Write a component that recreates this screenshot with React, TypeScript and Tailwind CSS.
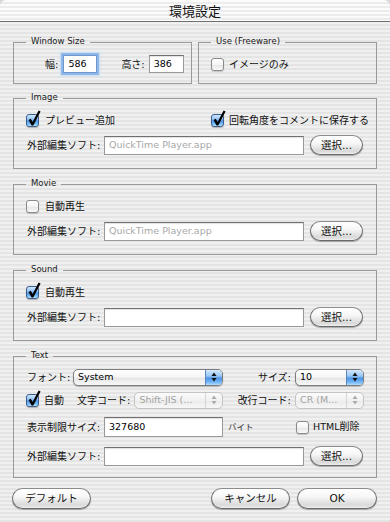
import React from "react";

const STRIPES =
  "bg-[repeating-linear-gradient(to_bottom,#f0f0f0_0px,#f0f0f0_2px,#e4e4e4_2px,#e4e4e4_4px)]";

function Check({ checked }: { checked?: boolean }) {
  return (
    <span className="relative inline-block w-[13px] h-[13px] shrink-0">
      {checked ? (
        <span className="absolute inset-0 rounded-[3px] border border-[#3e5f8e] bg-[linear-gradient(to_bottom,#cfe6fd_0%,#8fc2f5_40%,#4a93e6_55%,#7fc3fb_85%,#b8e2ff_100%)] shadow-[0_1px_1px_rgba(0,0,0,0.25)]" />
      ) : (
        <span className="absolute inset-0 rounded-[3px] border border-[#8a8a8a] bg-[linear-gradient(to_bottom,#ffffff_0%,#f4f4f4_50%,#e6e6e6_55%,#fafafa_100%)] shadow-[0_1px_1px_rgba(0,0,0,0.18)]" />
      )}
      {checked && (
        <svg
          className="absolute left-[1px] top-[-4px] overflow-visible"
          width="14"
          height="17"
          viewBox="0 0 14 17"
        >
          <polygon
            points="1.5,10 3.8,8.8 5.6,12 11.6,0.5 13.6,1.4 6.3,15.6 4.6,15.6"
            fill="#000"
          />
        </svg>
      )}
    </span>
  );
}

function Field({
  w,
  h = 19,
  value,
  gray,
  focus,
}: {
  w: string;
  h?: number;
  value?: string;
  gray?: boolean;
  focus?: boolean;
}) {
  return (
    <div
      className={`${w} ${h === 18 ? "h-[18px]" : h === 20 ? "h-[20px]" : "h-[19px]"} shrink-0 flex items-center bg-white border ${
        focus
          ? "border-[#6f97c9] shadow-[0_0_0_2px_#8db8ea,0_0_2px_3px_#c6dcf4]"
          : "border-[#999] border-t-[#707070] shadow-[inset_0_1px_1px_rgba(0,0,0,0.12)]"
      }`}
    >
      {value && (
        <span
          className={`pl-[4px] text-[9.5px] font-['DejaVu_Sans',sans-serif] ${
            gray ? "text-[#a8a8a8]" : "text-black"
          }`}
        >
          {value}
        </span>
      )}
    </div>
  );
}

function Btn({ label, w, h = 20 }: { label: string; w: string; h?: number }) {
  return (
    <div
      className={`${w} ${h === 21 ? "h-[21px]" : "h-[20px]"} shrink-0 rounded-full border border-[#6a6a6a] border-t-[#8c8c8c] bg-[linear-gradient(to_bottom,#ffffff_0%,#f7f7f7_40%,#e9e9e9_60%,#d9d9d9_85%,#f0f0f0_100%)] shadow-[0_1px_1px_rgba(0,0,0,0.3)] flex items-center justify-center`}
    >
      <span className="text-[10.5px] leading-none">{label}</span>
    </div>
  );
}

function Arrows({ disabled }: { disabled?: boolean }) {
  const c = disabled ? "#a9a9a9" : "#111";
  return (
    <svg width="6" height="10" viewBox="0 0 6 10">
      <polygon points="3,0.5 5.5,4 0.5,4" fill={c} />
      <polygon points="0.5,6 5.5,6 3,9.5" fill={c} />
    </svg>
  );
}

function Popup({
  w,
  text,
  disabled,
}: {
  w: string;
  text: string;
  disabled?: boolean;
}) {
  return (
    <div
      className={`${w} h-[17px] shrink-0 flex rounded-[5px] border overflow-hidden ${
        disabled
          ? "border-[#c4c4c4] bg-[linear-gradient(to_bottom,#fbfbfb,#f1f1f1_50%,#ebebeb_55%,#f7f7f7)]"
          : "border-[#7d7d7d] bg-[linear-gradient(to_bottom,#ffffff,#f6f6f6_45%,#e6e6e6_55%,#f8f8f8)] shadow-[0_1px_1px_rgba(0,0,0,0.25)]"
      }`}
    >
      <div className="flex-1 flex items-center pl-[4px] overflow-hidden">
        <span
          className={`text-[9.5px] whitespace-nowrap font-['DejaVu_Sans','Noto_Sans_CJK_JP',sans-serif] ${
            disabled ? "text-[#a4a4a4]" : "text-black"
          }`}
        >
          {text}
        </span>
      </div>
      <div
        className={`w-[17px] flex items-center justify-center border-l ${
          disabled
            ? "border-[#d6d6d6] bg-transparent"
            : "border-[#5d86bd] bg-[linear-gradient(to_bottom,#d6e9fd_0%,#97c6f5_40%,#4f96e8_55%,#6fb3f6_80%,#b3defe_100%)]"
        }`}
      >
        <Arrows disabled={disabled} />
      </div>
    </div>
  );
}

function Group({
  title,
  className,
  children,
}: {
  title: string;
  className?: string;
  children: React.ReactNode;
}) {
  return (
    <fieldset className={`border border-[#9a9a9a] min-w-0 ${className ?? ""}`}>
      <legend className="ml-[12px] px-[5px] leading-[12px] text-[8.5px] font-normal text-[#1a1a1a] font-['DejaVu_Sans',sans-serif]">
        <span className="relative top-[-1px]">{title}</span>
      </legend>
      {children}
    </fieldset>
  );
}

function EditorRow({ value }: { value?: string }) {
  return (
    <div className="h-[20px] flex items-center pl-[13px]">
      <span className="w-[77px] shrink-0 whitespace-nowrap">外部編集ソフト:</span>
      <Field w="w-[200px]" value={value} gray />
      <div className="ml-[6px]">
        <Btn label="選択..." w="w-[53px]" />
      </div>
    </div>
  );
}

export default function App() {
  return (
    <div className="w-[390px] h-[522px] overflow-hidden flex flex-col bg-[#d8d8d8] text-[#111] text-[10px] font-['DejaVu_Sans','Noto_Sans_CJK_JP',sans-serif]">
      <div className="h-[22px] shrink-0 rounded-t-[6px] border-b border-[#6f6f6f] bg-[repeating-linear-gradient(to_bottom,#fbfbfb_0px,#fbfbfb_2px,#ececec_2px,#ececec_4px)] flex items-center justify-center">
        <span className="text-[13px] font-['Noto_Sans_CJK_JP',sans-serif] text-[#111]">
          環境設定
        </span>
      </div>
      <div className={`flex-1 flex flex-col px-[13px] pt-[14px] ${STRIPES}`}>
        {/* Row 1 */}
        <div className="flex gap-[6px]">
          <Group title="Window Size" className="w-[179px]">
            <div className="h-[35px] pb-[3px] flex items-center pl-[31px]">
              <span className="whitespace-nowrap">幅:</span>
              <div className="ml-[5px]">
                <Field w="w-[34px]" h={18} value="586" focus />
              </div>
              <span className="ml-[24px] whitespace-nowrap">高さ:</span>
              <div className="ml-[4px]">
                <Field w="w-[35px]" h={18} value="386" />
              </div>
            </div>
          </Group>
          <Group title="Use (Freeware)" className="w-[179px]">
            <div className="h-[35px] pb-[3px] flex items-center pl-[12px]">
              <Check />
              <span className="ml-[5px]">イメージのみ</span>
            </div>
          </Group>
        </div>

        {/* Image */}
        <Group title="Image" className="mt-[8px]">
          <div className="pt-[9px] pb-[13px]">
            <div className="h-[14px] flex items-center pl-[12px]">
              <div className="w-[185px] flex items-center">
                <Check checked />
                <span className="ml-[6px]">プレビュー追加</span>
              </div>
              <Check checked />
              <span className="ml-[5px] whitespace-nowrap">回転角度をコメントに保存する</span>
            </div>
            <div className="mt-[8px]">
              <EditorRow value="QuickTime Player.app" />
            </div>
          </div>
        </Group>

        {/* Movie */}
        <Group title="Movie" className="mt-[9px]">
          <div className="pt-[9px] pb-[13px]">
            <div className="h-[14px] flex items-center pl-[12px]">
              <Check />
              <span className="ml-[6px]">自動再生</span>
            </div>
            <div className="mt-[8px]">
              <EditorRow value="QuickTime Player.app" />
            </div>
          </div>
        </Group>

        {/* Sound */}
        <Group title="Sound" className="mt-[9px]">
          <div className="pt-[9px] pb-[13px]">
            <div className="h-[14px] flex items-center pl-[12px]">
              <Check checked />
              <span className="ml-[6px]">自動再生</span>
            </div>
            <div className="mt-[8px]">
              <EditorRow />
            </div>
          </div>
        </Group>

        {/* Text */}
        <Group title="Text" className="mt-[9px]">
          <div className="pt-[6px] pb-[11px]">
            <div className="h-[18px] flex items-center pl-[13px] pr-[12px]">
              <span className="w-[46px] shrink-0 whitespace-nowrap">フォント:</span>
              <Popup w="w-[150px]" text="System" />
              <span className="flex-1 text-right pr-[4px] whitespace-nowrap">サイズ:</span>
              <Popup w="w-[69px]" text="10" />
            </div>
            <div className="mt-[5px] h-[18px] flex items-center pl-[12px] pr-[12px]">
              <Check checked />
              <span className="ml-[5px] whitespace-nowrap">自動</span>
              <span className="ml-[13px] whitespace-nowrap">文字コード:</span>
              <div className="ml-[4px]">
                <Popup w="w-[89px]" text="Shift-JIS (..." disabled />
              </div>
              <span className="flex-1 text-right pr-[4px] whitespace-nowrap">改行コード:</span>
              <Popup w="w-[69px]" text="CR (M..." disabled />
            </div>
            <div className="mt-[8px] h-[20px] flex items-center pl-[13px]">
              <span className="w-[77px] shrink-0 whitespace-nowrap">表示制限サイズ:</span>
              <Field w="w-[119px]" h={20} value="327680" />
              <span className="ml-[5px] text-[8.5px] text-[#333] whitespace-nowrap">バイト</span>
              <div className="ml-auto w-[80px] flex items-center">
                <Check />
                <span className="ml-[4px] whitespace-nowrap">
                  <span className="text-[9.5px]">HTML</span>削除
                </span>
              </div>
            </div>
            <div className="mt-[9px]">
              <EditorRow />
            </div>
          </div>
        </Group>

        {/* Bottom buttons */}
        <div className="mt-[10px] flex items-center">
          <div className="ml-[-1px]">
            <Btn label="デフォルト" w="w-[79px]" h={21} />
          </div>
          <div className="ml-auto flex gap-[7px]">
            <Btn label="キャンセル" w="w-[79px]" h={21} />
            <Btn label="OK" w="w-[80px]" h={21} />
          </div>
        </div>
      </div>
    </div>
  );
}
